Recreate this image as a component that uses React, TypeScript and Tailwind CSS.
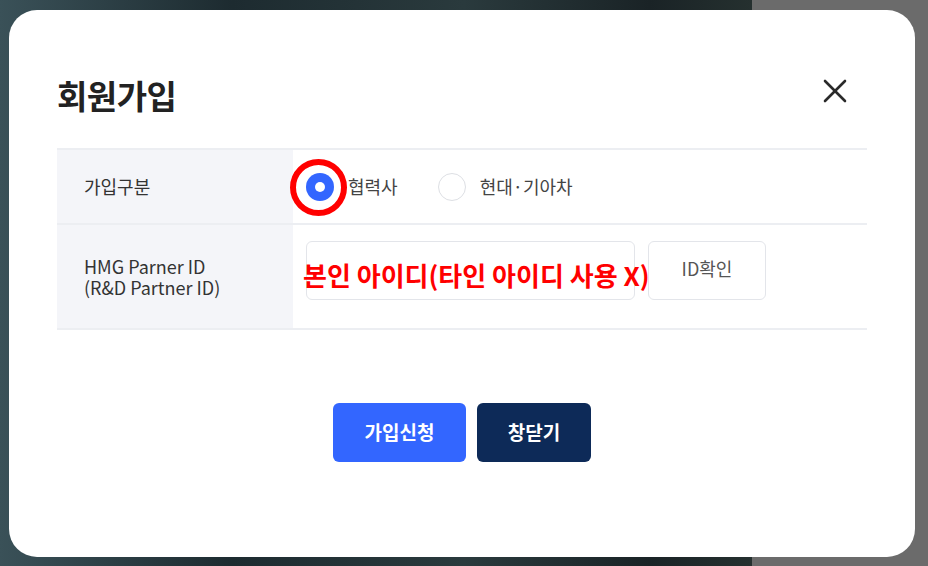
import React, { useState } from 'react';

const font = { fontFamily: '"Noto Sans CJK KR", "Noto Sans", sans-serif' };

const App: React.FC = () => {
  const [memberType, setMemberType] = useState<'partner' | 'hmg'>('partner');
  const [partnerId, setPartnerId] = useState('');

  return (
    <div
      className="h-[566px] w-full overflow-hidden bg-[linear-gradient(90deg,#3a5158_0%,#1d2b30_25%,#2a3a3d_50%,#1a2326_70%,#25302f_81%,#6b6b6b_81%)] pl-[9px] pt-[10px]"
      style={font}
    >
      <div className="flex h-[547px] w-[906px] flex-col rounded-[28px] bg-white px-12">
        <div className="flex items-center justify-between pt-[64px]">
          <h1 className="text-[33px] font-bold leading-[42px] tracking-[-0.5px] text-[#222]">회원가입</h1>
          <button className="mb-[8px] mr-[20px] flex h-[24px] w-[24px] items-center justify-center">
            <svg width="24" height="24" viewBox="0 0 24 24" fill="none" stroke="#2a2a2a" strokeWidth="2.6" strokeLinecap="round">
              <line x1="2" y1="2" x2="22" y2="22" />
              <line x1="22" y1="2" x2="2" y2="22" />
            </svg>
          </button>
        </div>

        <div className="mt-[32px] border-t-2 border-[#eceef2]">
          <div className="flex h-[75px] border-b-2 border-[#eceef2]">
            <div className="flex w-[236px] items-center bg-[#f4f5f9] pl-[27px] text-[18px] text-[#333]">가입구분</div>
            <div className="flex items-center pl-[13px]">
              <label className="flex cursor-pointer items-center" onClick={() => setMemberType('partner')}>
                <span className="relative flex h-[28px] w-[28px] items-center justify-center">
                  {memberType === 'partner' ? (
                    <span className="flex h-[28px] w-[28px] items-center justify-center rounded-full bg-[#3366ff]">
                      <span className="h-[10px] w-[10px] rounded-full bg-white" />
                    </span>
                  ) : (
                    <span className="h-[28px] w-[28px] rounded-full border border-[#dddfe4] bg-white" />
                  )}
                  <span className="absolute left-[-16px] top-[-14px] h-[57px] w-[57px] rounded-full border-[6px] border-[#ff0000]" />
                </span>
                <span className="ml-[14px] text-[18px] text-[#444]">협력사</span>
              </label>
              <label className="ml-[40px] flex cursor-pointer items-center" onClick={() => setMemberType('hmg')}>
                {memberType === 'hmg' ? (
                  <span className="flex h-[28px] w-[28px] items-center justify-center rounded-full bg-[#3366ff]">
                    <span className="h-[10px] w-[10px] rounded-full bg-white" />
                  </span>
                ) : (
                  <span className="h-[28px] w-[28px] rounded-full border border-[#dddfe4] bg-white" />
                )}
                <span className="ml-[14px] text-[18px] text-[#444]">현대·기아차</span>
              </label>
            </div>
          </div>

          <div className="flex h-[105px] border-b-2 border-[#eceef2]">
            <div className="flex w-[236px] flex-col justify-center bg-[#f4f5f9] pl-[27px] text-[18px] leading-[21px] text-[#333]">
              <span>HMG Parner ID</span>
              <span>(R&amp;D Partner ID)</span>
            </div>
            <div className="relative flex items-start pl-[13px] pt-[16px]">
              <input
                value={partnerId}
                onChange={(e) => setPartnerId(e.target.value)}
                className="h-[59px] w-[329px] rounded-[6px] border border-[#e3e5ea] px-4 text-[16px] outline-none"
              />
              <button className="ml-[13px] h-[59px] w-[118px] rounded-[6px] border border-[#e3e5ea] bg-white pb-[4px] text-[18px] text-[#555]">
                ID확인
              </button>
              <span className="pointer-events-none absolute left-[10px] top-[33px] whitespace-nowrap text-[26px] font-bold leading-[34px] text-[#ff0000]">
                본인 아이디(타인 아이디 사용 X)
              </span>
            </div>
          </div>
        </div>

        <div className="mt-[73px] flex justify-center gap-[11px]">
          <button className="h-[59px] w-[133px] rounded-[6px] bg-[#3366ff] text-[19px] font-bold text-white">가입신청</button>
          <button className="h-[59px] w-[114px] rounded-[6px] bg-[#0d2a58] text-[19px] font-bold text-white">창닫기</button>
        </div>
      </div>
    </div>
  );
};

export default App;
